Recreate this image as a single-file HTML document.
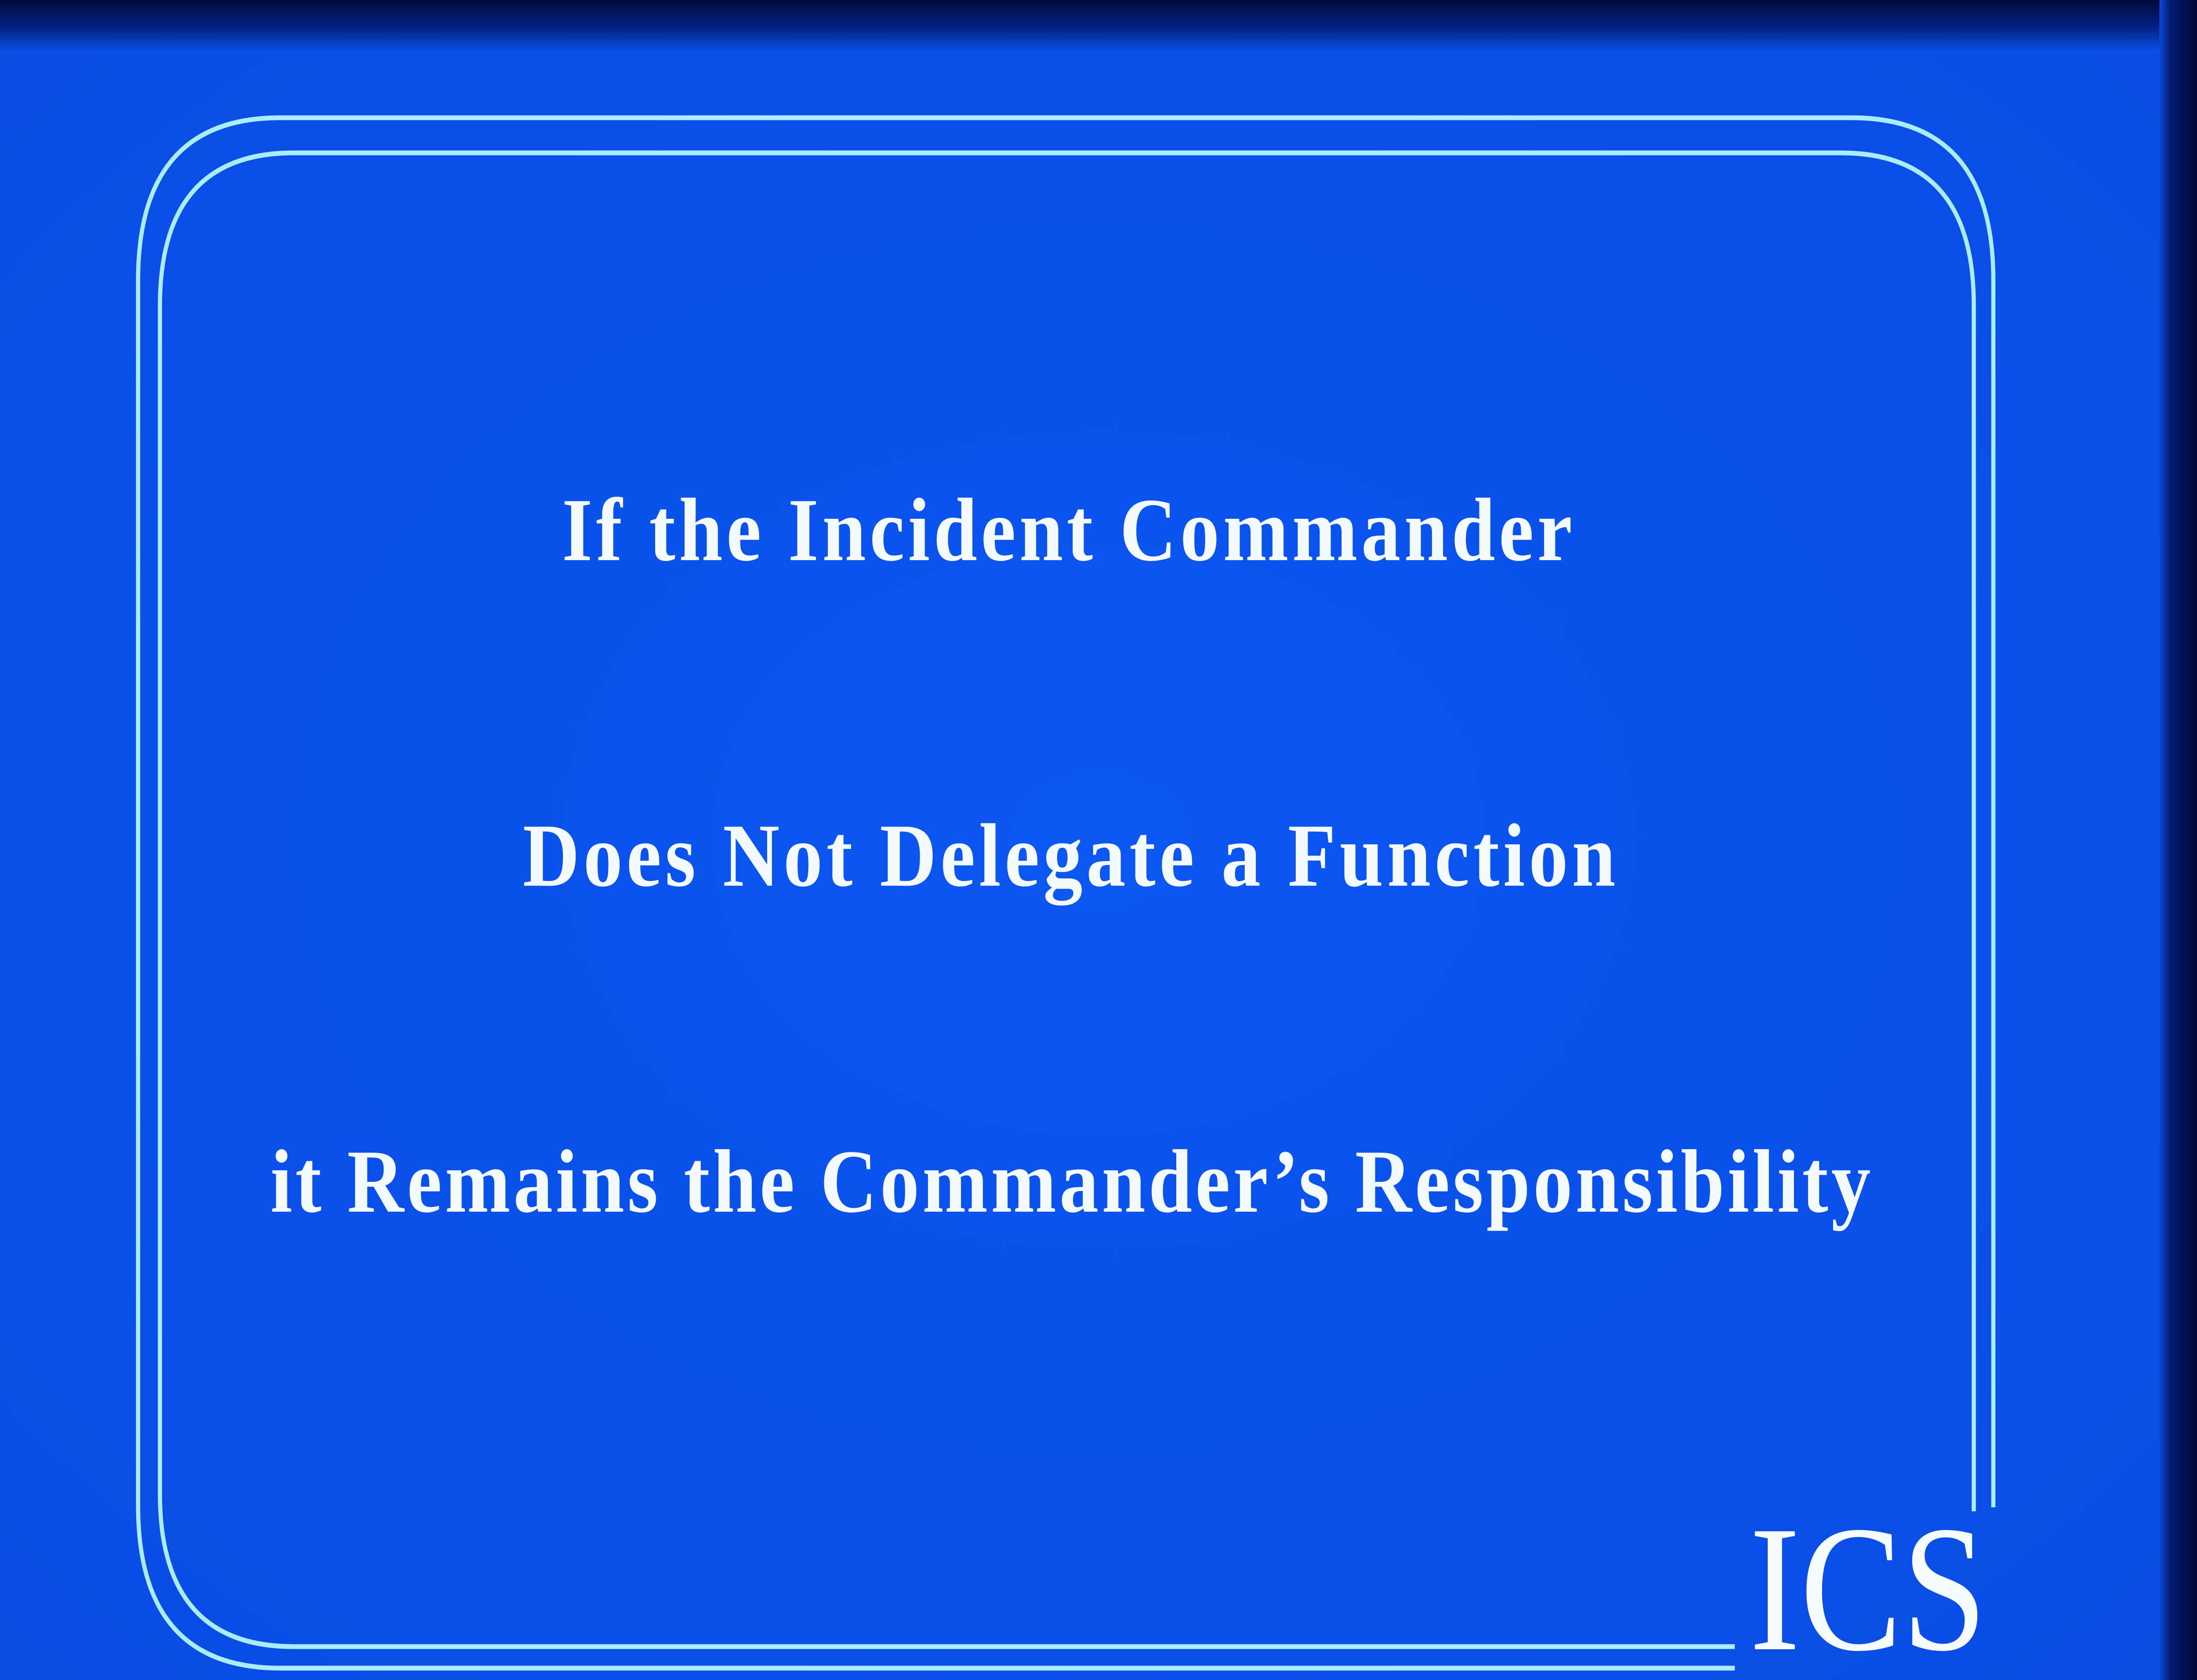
<!DOCTYPE html>
<html><head><meta charset="utf-8"><style>
html,body{margin:0;padding:0;background:#0b52ec;width:100%;height:100%;overflow:hidden;}
svg{position:fixed;left:0;top:0;display:block;width:100vw;height:100vh;}
</style></head><body>
<svg viewBox="0 0 5728 3824" preserveAspectRatio="none" xmlns="http://www.w3.org/2000/svg">
<defs>
<linearGradient id="top" x1="0" y1="0" x2="0" y2="1">
<stop offset="0" stop-color="#020a3a"/><stop offset="0.55" stop-color="#04238a"/><stop offset="1" stop-color="#0b52ec"/>
</linearGradient>
<linearGradient id="right" x1="0" y1="0" x2="1" y2="0">
<stop offset="0" stop-color="#0b4ad8"/><stop offset="0.3" stop-color="#031a70"/><stop offset="1" stop-color="#010838"/>
</linearGradient>
<radialGradient id="bg" cx="0.5" cy="0.5" r="0.7">
<stop offset="0" stop-color="#0c56f2"/><stop offset="1" stop-color="#0a4ce4"/>
</radialGradient>
</defs>
<rect width="5728" height="3824" fill="url(#bg)"/>
<rect x="0" y="0" width="5728" height="120" fill="url(#top)"/>
<rect x="5630" y="0" width="98" height="3824" fill="url(#right)"/>
<g fill="none" stroke="#a8ecff" stroke-width="11">
<path d="M4523 3797 L730 3797 Q360 3797 360 3427 L360 638 Q360 268 730 268 L4827 268 Q5197 268 5197 638 L5197 3431"/>
<path d="M4523 3748 L765 3748 Q417 3748 417 3400 L417 696 Q417 348 765 348 L4800 348 Q5146 348 5146 694 L5146 3440"/>
</g>
<g fill="#f4fbff" font-family="'Liberation Serif',serif" font-weight="bold" font-size="205">
<text x="1465" y="1275" textLength="2634" lengthAdjust="spacing">If the Incident Commander</text>
<text x="1363" y="2016" textLength="2849" lengthAdjust="spacing">Does Not Delegate a Function</text>
<text x="705" y="2758" textLength="4172" lengthAdjust="spacing">it Remains the Commander’s Responsibility</text>
</g>
<text x="4561" y="3754" fill="#f6fbff" font-family="'Liberation Serif',serif" font-size="410" textLength="619" lengthAdjust="spacingAndGlyphs">ICS</text>
</svg>
</body></html>
